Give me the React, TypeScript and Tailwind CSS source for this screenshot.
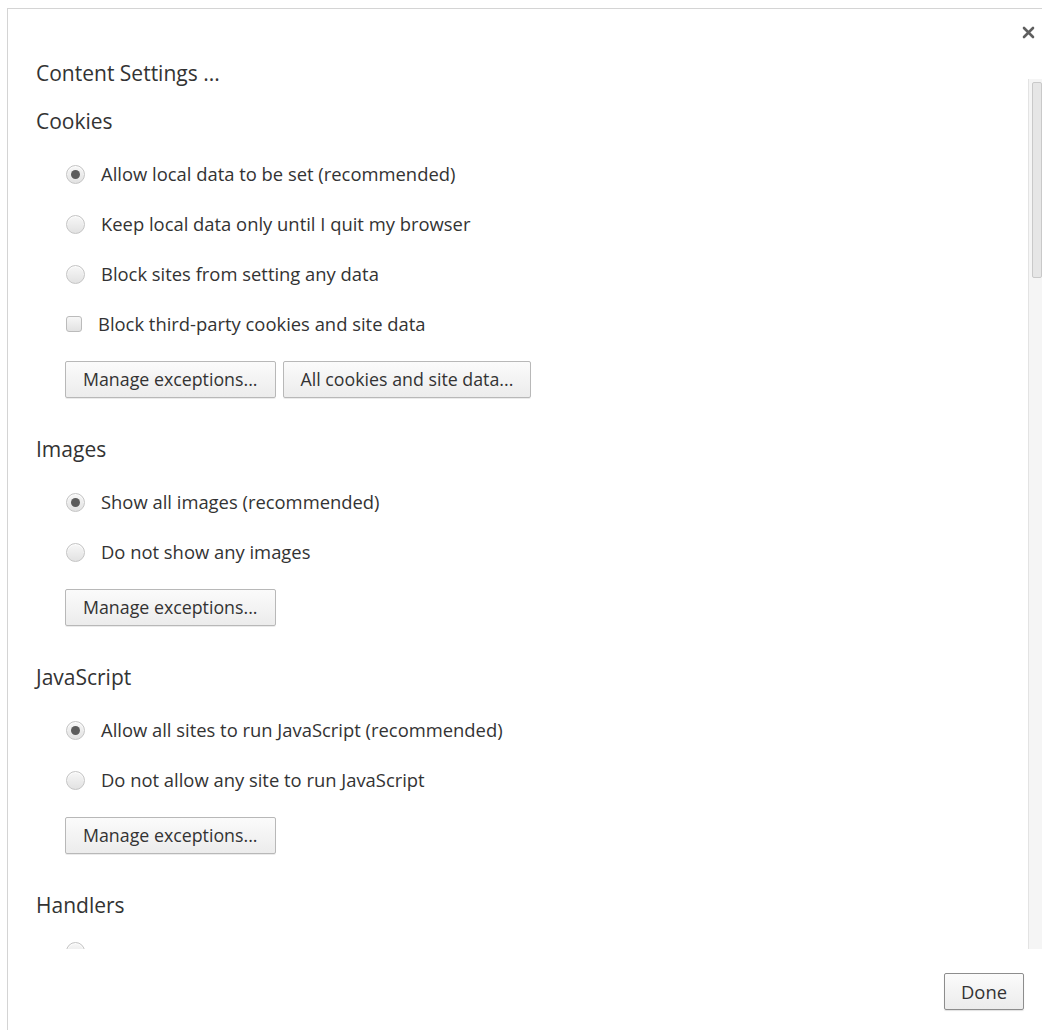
import React from "react";

type Option = { label: string; checked?: boolean };

interface SectionProps {
  title: string;
  radios: Option[];
  checkbox?: string;
  buttons?: string[];
  tight?: boolean;
}

const sections: SectionProps[] = [
  {
    title: "Cookies",
    radios: [
      { label: "Allow local data to be set (recommended)", checked: true },
      { label: "Keep local data only until I quit my browser" },
      { label: "Block sites from setting any data" },
    ],
    checkbox: "Block third-party cookies and site data",
    buttons: ["Manage exceptions...", "All cookies and site data..."],
  },
  {
    title: "Images",
    radios: [
      { label: "Show all images (recommended)", checked: true },
      { label: "Do not show any images" },
    ],
    buttons: ["Manage exceptions..."],
  },
  {
    title: "JavaScript",
    radios: [
      { label: "Allow all sites to run JavaScript (recommended)", checked: true },
      { label: "Do not allow any site to run JavaScript" },
    ],
    buttons: ["Manage exceptions..."],
  },
  {
    // only the top of the first option peeks out above the fold
    title: "Handlers",
    radios: [{ label: "" }],
    tight: true,
  },
];

function Radio({ checked }: { checked?: boolean }) {
  return (
    <span className="flex h-[19px] w-[19px] shrink-0 items-center justify-center rounded-full border border-[#c4c4c4] bg-gradient-to-b from-[#f7f7f7] to-[#e2e2e2] shadow-[inset_0_1px_1px_rgba(255,255,255,0.9)]">
      {checked && <span className="h-[9px] w-[9px] rounded-full bg-[#5c5c5c]" />}
    </span>
  );
}

function Checkbox() {
  return (
    <span className="h-[16px] w-[16px] shrink-0 rounded-[3px] border border-[#bbbbbb] bg-gradient-to-b from-[#f7f7f7] to-[#e2e2e2]" />
  );
}

function GrayButton({ label }: { label: string }) {
  return (
    <button className="h-[37px] rounded-[2px] border border-[#b8b8b8] bg-gradient-to-b from-[#fbfbfb] to-[#ececec] px-[17px] text-[17.8px] text-[#333] shadow-[0_1px_0_rgba(0,0,0,0.08)]">
      {label}
    </button>
  );
}

function Section({ title, radios, checkbox, buttons, tight }: SectionProps) {
  return (
    <section className="flex flex-col">
      <h3 className="h-6 text-[21px] leading-6 text-[#333]">{title}</h3>
      <div className={"flex flex-col pl-[30px] " + (tight ? "mt-[9px]" : "mt-4")}>
        {radios.map((r, i) => (
          <label key={i} className="flex h-[50px] items-center gap-[16px] text-[18.4px] text-[#333]">
            <Radio checked={r.checked} />
            {r.label && <span>{r.label}</span>}
          </label>
        ))}
        {checkbox && (
          <label className="flex h-[50px] items-center gap-[16px] text-[18.4px] text-[#333]">
            <Checkbox />
            <span>{checkbox}</span>
          </label>
        )}
        {buttons && (
          <div className="-ml-[1px] mb-[39px] mt-[12px] flex gap-[7px]">
            {buttons.map((b) => (
              <GrayButton key={b} label={b} />
            ))}
          </div>
        )}
      </div>
    </section>
  );
}

export default function App() {
  return (
    <div
      className="h-[1030px] w-full overflow-hidden bg-white pl-[7px] pt-2"
      style={{ fontFamily: '"Open Sans", "Noto Sans", sans-serif' }}
    >
      <div className="flex h-[1022px] flex-col border-l border-t border-[#d4d4d4] bg-white">
        {/* header */}
        <div className="flex h-[70px] items-start justify-between">
          <h1 className="pl-[28px] pt-[52px] text-[21px] leading-6 text-[#333]">Content Settings ...</h1>
          <button className="mr-[6px] mt-[15px] flex h-4 w-4 items-center justify-center">
            <svg width="13" height="13" viewBox="0 0 13 13">
              <path d="M2 2 L11 11 M11 2 L2 11" stroke="#5f5f5f" strokeWidth="2.6" strokeLinecap="round" />
            </svg>
          </button>
        </div>

        {/* scrolling body */}
        <div className="flex h-[870px]">
          <div className="flex-1 overflow-hidden pl-[28px] pt-[30px]">
            {sections.map((s) => (
              <Section key={s.title} {...s} />
            ))}
          </div>
          <div className="w-[14px] border-l border-[#e3e3e3] bg-[#f5f5f5] pl-[3px] pt-[3px]">
            <div className="h-[196px] w-full rounded-[2px] border border-[#c9c9c9] bg-[#e6e6e6]" />
          </div>
        </div>

        {/* footer */}
        <div className="flex flex-1 items-start justify-end pr-[18px] pt-[24px]">
          <button className="h-[37px] w-[80px] rounded-[2px] border border-[#8d8d8d] bg-gradient-to-b from-[#fbfbfb] to-[#ececec] text-[18.4px] text-[#333] shadow-[0_1px_1px_rgba(0,0,0,0.12)]">
            Done
          </button>
        </div>
      </div>
    </div>
  );
}
